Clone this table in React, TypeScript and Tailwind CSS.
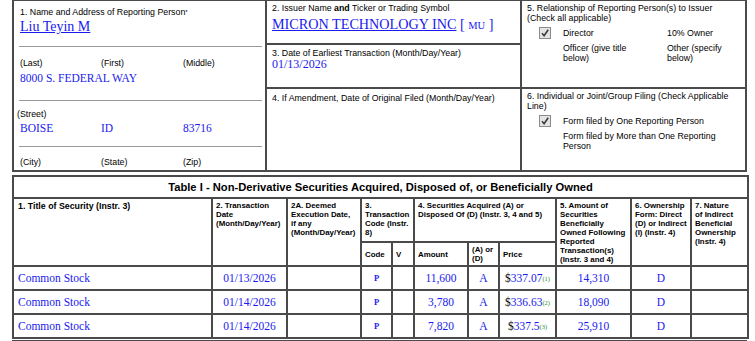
import React from 'react'

const SANS = "font-['Liberation_Sans',Arial,sans-serif]"
const SERIF = "font-['Liberation_Serif','Times_New_Roman',serif]"

function CheckBox() {
  return (
    <svg width="12" height="12" viewBox="0 0 12 12" className="shrink-0">
      <rect x="0.5" y="0.5" width="11" height="11" fill="#e4e4e4" stroke="#8c8c8c" />
      <path d="M3 6.3 L5.1 8.7 L9.2 2.8" fill="none" stroke="#3a3a3a" strokeWidth="1.6" />
    </svg>
  )
}

const rows = [
  { date: '01/13/2026', amount: '11,600', price: '337.07', fn: '(1)', owned: '14,310' },
  { date: '01/14/2026', amount: '3,780', price: '336.63', fn: '(2)', owned: '18,090' },
  { date: '01/14/2026', amount: '7,820', price: '337.5', fn: '(3)', owned: '25,910' },
]

const cell = 'border-2 border-[#4a4a4a] align-top px-[3px] pt-[2px]'
const subCell = 'border-2 border-[#4a4a4a] px-[3px] align-middle'
const dataCell = 'border-2 border-[#4a4a4a] text-center align-middle'

export default function App() {
  return (
    <div className={`w-[755px] h-[341px] overflow-hidden bg-white pl-[12px] pr-[8px] text-black ${SANS}`}>
      {/* top boxes */}
      <div className="flex h-[172px] border-x-2 border-b-2 border-t border-[#4a4a4a]">
        <div className="w-[253px] border-r-2 border-[#4a4a4a] flex flex-col">
          <div className="h-[45px] pl-[6px] pt-[6px]">
            <div className="text-[8.8px] leading-[10px]">
              1. Name and Address of Reporting Person<sup className="text-[6px] relative -top-[1px]">*</sup>
            </div>
            <div className={`${SERIF} text-[14px] leading-[16px] text-[#1a1aee] underline mt-[2px]`}>Liu Teyin M</div>
          </div>
          <div className="h-px bg-[#9a9a9a] ml-[5px] mr-[3px]" />
          <div className="h-[53px] pt-[11px] pl-[6px]">
            <div className="grid grid-cols-[81px_82px_1fr] text-[8.8px] leading-[10px]">
              <span>(Last)</span>
              <span>(First)</span>
              <span>(Middle)</span>
            </div>
            <div className={`${SERIF} text-[11.5px] leading-[14px] text-[#1a1aee] mt-[3px]`}>8000 S. FEDERAL WAY</div>
          </div>
          <div className="h-px bg-[#9a9a9a] ml-[5px] mr-[3px]" />
          <div className="h-[45px] pt-[8px]">
            <div className="text-[8.8px] leading-[10px] pl-[3px]">(Street)</div>
            <div className={`grid grid-cols-[81px_82px_1fr] pl-[6px] ${SERIF} text-[11.5px] leading-[14px] text-[#1a1aee] mt-[2px]`}>
              <span>BOISE</span>
              <span>ID</span>
              <span>83716</span>
            </div>
          </div>
          <div className="h-px bg-[#9a9a9a] ml-[5px] mr-[3px]" />
          <div className="pt-[10px] pl-[6px] grid grid-cols-[81px_82px_1fr] text-[8.8px] leading-[10px]">
            <span>(City)</span>
            <span>(State)</span>
            <span>(Zip)</span>
          </div>
        </div>

        <div className="w-[255px] border-r-2 border-[#4a4a4a] flex flex-col">
          <div className="h-[44px] border-b-2 border-[#4a4a4a] pl-[5px] pt-[2px]">
            <div className="text-[8.8px] leading-[10px]">
              2. Issuer Name <b>and</b> Ticker or Trading Symbol
            </div>
            <div className={`${SERIF} text-[14.2px] leading-[16px] text-[#1a1aee] mt-[3px]`}>
              <span className="underline">MICRON TECHNOLOGY INC</span> [ <span className="text-[10.5px]">MU</span> ]
            </div>
          </div>
          <div className="h-[44px] border-b-2 border-[#4a4a4a] pl-[5px] pt-[3px]">
            <div className="text-[8.8px] leading-[10px]">3. Date of Earliest Transaction (Month/Day/Year)</div>
            <div className={`${SERIF} text-[12px] leading-[13px] text-[#1a1aee]`}>01/13/2026</div>
          </div>
          <div className="pl-[5px] pt-[4px] text-[8.8px] leading-[10px]">
            4. If Amendment, Date of Original Filed (Month/Day/Year)
          </div>
        </div>

        <div className="flex-1 flex flex-col">
          <div className="h-[88px] border-b-2 border-[#4a4a4a] pl-[5px] pt-[2px] text-[8.8px] leading-[10px]">
            <div>5. Relationship of Reporting Person(s) to Issuer</div>
            <div>(Check all applicable)</div>
            <div className="flex items-center mt-[4px] pl-[12px] h-[11px]">
              <div className="w-[24px]"><CheckBox /></div>
              <span className="w-[104px]">Director</span>
              <span>10% Owner</span>
            </div>
            <div className="flex mt-[5px] pl-[36px]">
              <span className="w-[104px]">Officer (give title<br />below)</span>
              <span>Other (specify<br />below)</span>
            </div>
          </div>
          <div className="pl-[5px] pt-[2px] text-[8.8px] leading-[10px]">
            <div>6. Individual or Joint/Group Filing (Check Applicable</div>
            <div>Line)</div>
            <div className="flex items-center mt-[4px] pl-[12px] h-[11px]">
              <div className="w-[24px]"><CheckBox /></div>
              <span>Form filed by One Reporting Person</span>
            </div>
            <div className="mt-[5px] pl-[36px]">
              Form filed by More than One Reporting<br />Person
            </div>
          </div>
        </div>
      </div>

      {/* Table I */}
      <table className="mt-[3px] w-[735px] table-fixed border-collapse text-[7.9px] leading-[9px] font-bold">
        <colgroup>
          <col className="w-[199px]" />
          <col className="w-[75px]" />
          <col className="w-[74px]" />
          <col className="w-[31px]" />
          <col className="w-[22px]" />
          <col className="w-[54px]" />
          <col className="w-[31px]" />
          <col className="w-[57px]" />
          <col className="w-[75px]" />
          <col className="w-[60px]" />
          <col className="w-[57px]" />
        </colgroup>
        <tbody>
          <tr className="h-[22px]">
            <td colSpan={11} className="border-2 border-[#4a4a4a] text-center text-[11.2px] leading-[14px] font-bold">
              Table I - Non-Derivative Securities Acquired, Disposed of, or Beneficially Owned
            </td>
          </tr>
          <tr className="h-[44px]">
            <td rowSpan={2} className={`${cell} pl-[4px] text-[8.8px] leading-[10px]`}>1. Title of Security (Instr. 3)</td>
            <td rowSpan={2} className={cell}>2. Transaction<br />Date<br />(Month/Day/Year)</td>
            <td rowSpan={2} className={cell}>2A. Deemed<br />Execution Date,<br />if any<br />(Month/Day/Year)</td>
            <td colSpan={2} className={cell}>3.<br />Transaction<br />Code (Instr.<br />8)</td>
            <td colSpan={3} className={cell}>4. Securities Acquired (A) or<br />Disposed Of (D) (Instr. 3, 4 and 5)</td>
            <td rowSpan={2} className={cell}>5. Amount of<br />Securities<br />Beneficially<br />Owned Following<br />Reported<br />Transaction(s)<br />(Instr. 3 and 4)</td>
            <td rowSpan={2} className={cell}>6. Ownership<br />Form: Direct<br />(D) or Indirect<br />(I) (Instr. 4)</td>
            <td rowSpan={2} className={cell}>7. Nature<br />of Indirect<br />Beneficial<br />Ownership<br />(Instr. 4)</td>
          </tr>
          <tr className="h-[24px]">
            <td className={subCell}>Code</td>
            <td className={subCell}>V</td>
            <td className={subCell}>Amount</td>
            <td className={subCell}>(A) or<br />(D)</td>
            <td className={subCell}>Price</td>
          </tr>
          {rows.map((r, i) => (
            <tr key={i} className={`h-[24px] ${SERIF} font-normal text-[11.5px] leading-[14px] text-[#1a1aee]`}>
              <td className="border-2 border-[#4a4a4a] pl-[4px] align-middle">Common Stock</td>
              <td className={dataCell}>{r.date}</td>
              <td className={dataCell}></td>
              <td className={`${dataCell} text-[8.5px] font-bold`}>P</td>
              <td className={dataCell}></td>
              <td className={dataCell}>{r.amount}</td>
              <td className={dataCell}>A</td>
              <td className={`${dataCell} whitespace-nowrap`}>
                <span className="text-black">$</span>{r.price}
                <sup className="text-[6.5px] text-[#2e8b2e] relative -top-[1px]">{r.fn}</sup>
              </td>
              <td className={dataCell}>{r.owned}</td>
              <td className={dataCell}>D</td>
              <td className={dataCell}></td>
            </tr>
          ))}
        </tbody>
      </table>
      <div className="mt-[1px] h-[10px] border-x-2 border-t-2 border-[#4a4a4a]" />
    </div>
  )
}
